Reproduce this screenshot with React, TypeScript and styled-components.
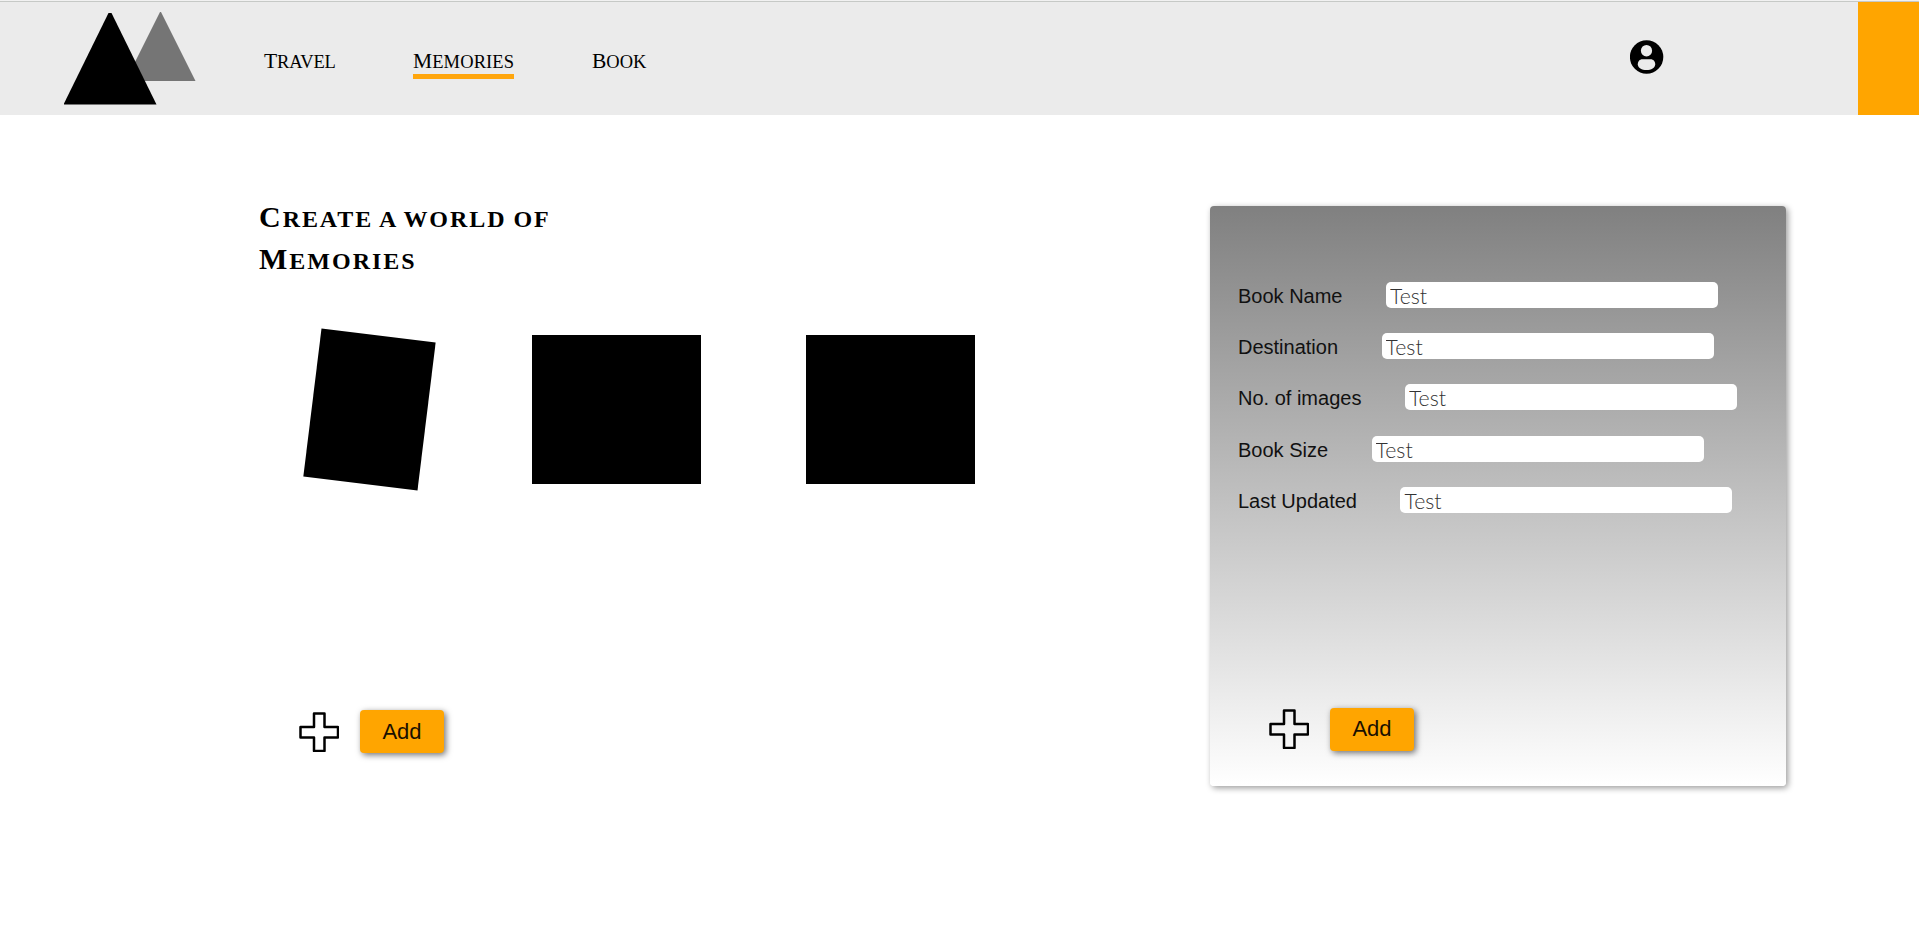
import React from "react";
import styled, { createGlobalStyle } from "styled-components";

const GlobalStyle = createGlobalStyle`
  * { box-sizing: border-box; }
  body {
    margin: 0;
    background: #fff;
    color: #000;
    font-family: "Liberation Sans", Arial, sans-serif;
    overflow: hidden;
  }
`;

const Page = styled.div`
  width: 1919px;
  height: 943px;
`;

const Header = styled.header`
  display: flex;
  height: 115px;
  background: #ebebeb;
  border-top: 1px solid #f1f1f1;
`;

const HeaderBar = styled.div`
  display: flex;
  flex: 1;
  border-top: 1px solid #c6c9c6;
  padding-left: 64px;
`;

const Logo = styled.svg`
  width: 132px;
  height: 113px;
  flex: none;
`;

const Nav = styled.nav`
  display: flex;
  align-items: flex-start;
  padding: 44px 0 0 68px;
  flex: 1;
`;

const NavLink = styled.a<{ $active?: boolean; $width: number; $gap: number; $spacing: number }>`
  display: block;
  width: ${(p) => p.$width}px;
  height: 33px;
  margin-right: ${(p) => p.$gap}px;
  border-bottom: 5px solid ${(p) => (p.$active ? "#ffa60d" : "transparent")};
  font-family: "Liberation Serif", serif;
  font-size: 18.5px;
  line-height: 30px;
  letter-spacing: ${(p) => p.$spacing}px;
  text-transform: uppercase;
  white-space: nowrap;
  &::first-letter { font-size: 21.5px; }
`;

const Avatar = styled.svg`
  width: 34px;
  height: 34px;
  margin: 38px 194px 0 0;
  flex: none;
`;

const Accent = styled.div`
  width: 61px;
  border-top: 1px solid #c6c9c6;
  background: #ffa500;
`;

const Main = styled.main`
  display: flex;
  align-items: flex-start;
  padding: 91px 133px 0 259px;
`;

const Gallery = styled.section`
  width: 951px;
`;

const Title = styled.h1`
  margin: -10px 0 0;
  height: 84px;
  font-family: "Liberation Serif", serif;
  font-weight: 700;
  font-size: 24px;
  line-height: 42px;
  text-transform: uppercase;
`;

const TitleLine = styled.span<{ $spacing: number }>`
  display: block;
  height: 42px;
  white-space: nowrap;
  letter-spacing: ${(p) => p.$spacing}px;
  word-spacing: -1px;
  &::first-letter { font-size: 30px; line-height: 42px; }
`;

const Books = styled.div`
  display: flex;
  gap: 105px;
  margin: 55px 0 0 53px;
`;

const Book = styled.div<{ $width: number; $tilt?: number }>`
  width: ${(p) => p.$width}px;
  height: 149px;
  background: #000;
  transform: ${(p) => (p.$tilt ? `rotate(${p.$tilt}deg)` : "none")};
`;

const Actions = styled.div<{ $top: number; $left: number }>`
  display: flex;
  align-items: center;
  gap: 21px;
  margin: ${(p) => p.$top}px 0 0 ${(p) => p.$left}px;
`;

const Plus = styled.svg`
  width: 40px;
  height: 40px;
`;

const AddButton = styled.button`
  width: 84px;
  height: 43px;
  padding: 0;
  border: 0;
  border-radius: 4px;
  background: #ffa500;
  box-shadow: 2px 2px 6px rgba(0, 0, 0, 0.55);
  color: #1a1000;
  font: 22px "Liberation Sans", Arial, sans-serif;
`;

const Panel = styled.section`
  width: 576px;
  height: 580px;
  padding-top: 76px;
  border-radius: 4px;
  background: linear-gradient(#808080, #fff);
  box-shadow: 2px 2px 6px rgba(0, 0, 0, 0.4);
`;

const Fields = styled.div`
  display: flex;
  flex-direction: column;
  gap: 25.2px;
  padding-left: 28px;
`;

const Field = styled.label`
  display: flex;
  align-items: center;
  height: 26px;
  gap: 43.5px;
  color: #111;
  font-size: 20px;
  line-height: 26px;
  white-space: nowrap;
`;

const FieldName = styled.span`
  padding-top: 2px;
`;

const Input = styled.input`
  width: 332px;
  height: 26px;
  padding: 2px 4px 0;
  border: 0;
  border-radius: 5px;
  background: #fff;
  font-family: Lato, sans-serif;
  font-size: 21.3px;
  font-weight: 300;
  &::placeholder { color: #333; opacity: 1; }
`;

const fields = ["Book Name", "Destination", "No. of images", "Book Size", "Last Updated"];

const AddAction = ({ top, left }: { top: number; left: number }) => (
  <Actions $top={top} $left={left}>
    <Plus viewBox="0 0 40 40" fill="none" stroke="#000" strokeWidth="2.5" strokeLinejoin="round">
      <path d="M15 1.5H25.5V15H39V25.5H25.5V39H15V25.5H1.5V15H15Z" />
    </Plus>
    <AddButton>Add</AddButton>
  </Actions>
);

export default function App() {
  return (
    <Page>
      <GlobalStyle />
      <Header>
        <HeaderBar>
          <Logo viewBox="0 0 132 113">
            <path d="M96 10H97L131.5 79H61.5Z" fill="#757575" />
            <path d="M44.5 11H47.5L92.5 102.5H-0.5Z" fill="#000" />
          </Logo>
          <Nav>
            <NavLink $width={71} $gap={78} $spacing={-0.1}>Travel</NavLink>
            <NavLink $width={101} $gap={78} $spacing={0.1} $active>Memories</NavLink>
            <NavLink $width={55} $gap={0} $spacing={0}>Book</NavLink>
          </Nav>
          <Avatar viewBox="0 0 34 34">
            <circle cx="16.6" cy="17" r="16.7" fill="#000" />
            <ellipse cx="16.5" cy="10.7" rx="5.6" ry="5.8" fill="#ebebeb" />
            <path d="M12.5 19.3H20.5C23.5 19.3 25.2 21.6 25.2 24.2C25.2 27.8 21.2 30 16.5 30S7.8 27.8 7.8 24.2C7.8 21.6 9.5 19.3 12.5 19.3Z" fill="#ebebeb" />
          </Avatar>
        </HeaderBar>
        <Accent />
      </Header>
      <Main>
        <Gallery>
          <Title>
            <TitleLine $spacing={1.95}>Create a world of</TitleLine>
            <TitleLine $spacing={2}>Memories</TitleLine>
          </Title>
          <Books>
            <Book $width={115} $tilt={7} />
            <Book $width={169} />
            <Book $width={169} />
          </Books>
          <AddAction top={226} left={40} />
        </Gallery>
        <Panel>
          <Fields>
            {fields.map((name) => (
              <Field key={name}>
                <FieldName>{name}</FieldName>
                <Input placeholder="Test" />
              </Field>
            ))}
          </Fields>
          <AddAction top={195} left={59} />
        </Panel>
      </Main>
    </Page>
  );
}
